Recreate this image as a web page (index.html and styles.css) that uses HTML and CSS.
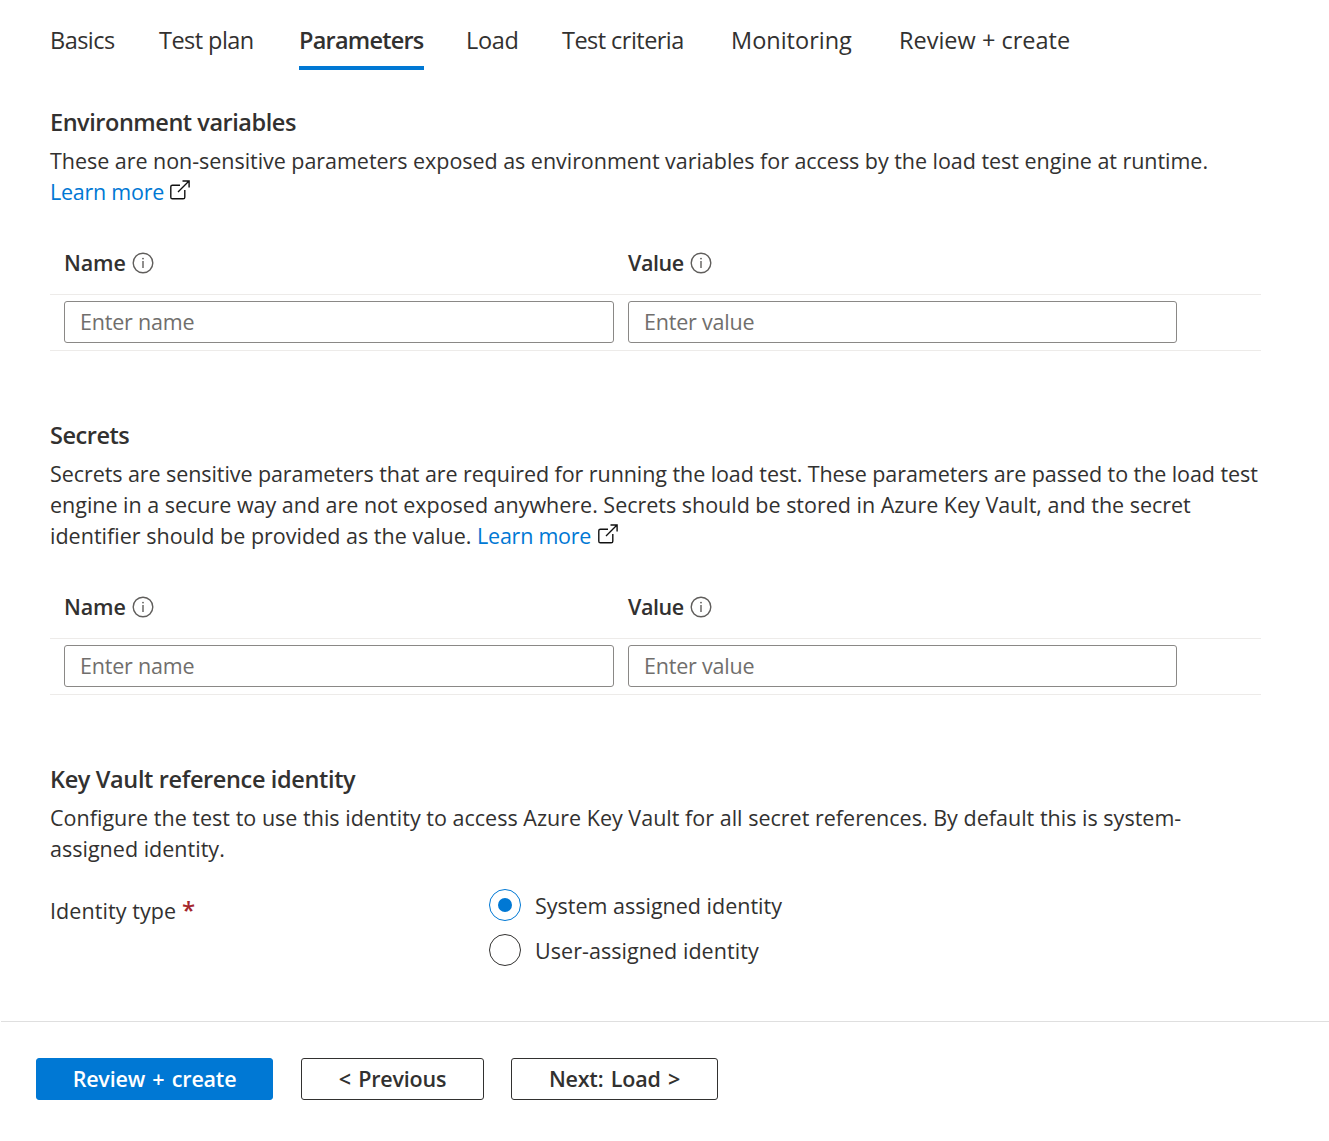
FILE: index.html
```html
<!DOCTYPE html>
<html lang="en">
<head>
<meta charset="utf-8">
<title>Create test - Parameters</title>
<link rel="stylesheet" href="styles.css">
</head>
<body>
<svg class="sprite" aria-hidden="true">
  <symbol id="info" viewBox="0 0 22 22">
    <circle cx="11" cy="11" r="9.8" fill="none" stroke="currentColor" stroke-width="1.4"/>
    <path d="M11 9v7" stroke="currentColor" stroke-width="1.4"/>
    <circle cx="11" cy="6.6" r="0.9" fill="currentColor"/>
  </symbol>
  <symbol id="external" viewBox="0 0 20 20">
    <path d="M10 5.2H2.4A1.6 1.6 0 0 0 .8 6.8v10.4a1.6 1.6 0 0 0 1.6 1.6h10.8a1.6 1.6 0 0 0 1.6-1.6V10M8 12L19 1M12.5 1h6.6v6.5" fill="none" stroke="currentColor" stroke-width="1.4"/>
  </symbol>
</svg>
<main class="content">
  <nav class="tabs">
    <a class="tab tight">Basics</a>
    <a class="tab tight">Test plan</a>
    <a class="tab active">Parameters</a>
    <a class="tab snug">Load</a>
    <a class="tab tight">Test criteria</a>
    <a class="tab">Monitoring</a>
    <a class="tab">Review + create</a>
  </nav>

  <section class="section first">
    <h2 class="title">Environment variables</h2>
    <p class="desc">These are non-sensitive parameters exposed as environment variables for access by the load test engine at runtime.<br><a class="link">Learn more</a> <svg class="external"><use href="#external"/></svg></p>
    <div class="table">
      <div class="row head">
        <div class="th">Name <svg class="info"><use href="#info"/></svg></div>
        <div class="th value">Value <svg class="info"><use href="#info"/></svg></div>
      </div>
      <div class="row">
        <input class="field" placeholder="Enter name">
        <input class="field" placeholder="Enter value">
      </div>
    </div>
  </section>

  <section class="section">
    <h2 class="title">Secrets</h2>
    <p class="desc"><span class="condensed">Secrets are sensitive parameters that are required for running the load test. These parameters are passed to the load test</span><br><span class="even">engine in a secure way and are not exposed anywhere. Secrets should be stored in Azure Key Vault, and the secret</span><br><span class="loose">identifier should be provided as the value.</span> <a class="link">Learn more</a> <svg class="external"><use href="#external"/></svg></p>
    <div class="table">
      <div class="row head">
        <div class="th">Name <svg class="info"><use href="#info"/></svg></div>
        <div class="th value">Value <svg class="info"><use href="#info"/></svg></div>
      </div>
      <div class="row">
        <input class="field" placeholder="Enter name">
        <input class="field" placeholder="Enter value">
      </div>
    </div>
  </section>

  <section class="section">
    <h2 class="title wide">Key Vault reference identity</h2>
    <p class="desc"><span class="loose">Configure the test to use this identity to access Azure Key Vault for all secret references. By default this is system-<br>assigned identity.</span></p>
    <div class="identity">
      <div class="label">Identity type <span class="required">*</span></div>
      <div class="options">
        <label class="option"><span class="radio checked"></span>System assigned identity</label>
        <label class="option user"><span class="radio"></span>User-assigned identity</label>
      </div>
    </div>
  </section>
</main>
<footer class="footer">
  <button class="button primary">Review + create</button>
  <button class="button previous">&lt; Previous</button>
  <button class="button next">Next: Load &gt;</button>
</footer>
</body>
</html>
```
FILE: styles.css
```css
* { box-sizing: border-box; }
body {
  margin: 0;
  height: 1141px;
  overflow: hidden;
  display: flex;
  flex-direction: column;
  background: #fff;
  color: #323130;
  font: 21.5px/31px "Segoe UI", "Open Sans", "Noto Sans", sans-serif;
}
.sprite { display: none; }
.content { height: 1021px; padding: 0 50px; }

.tabs {
  display: grid;
  grid-template-columns: 109px 140px 167px 96px 169px 168px auto;
  justify-items: start;
  height: 70px;
}
.tab {
  height: 70px;
  padding-top: 23px;
  border-bottom: 4px solid transparent;
  font-size: 23.5px;
  line-height: 34px;
  white-space: nowrap;
}
.tab.tight { letter-spacing: -0.54px; }
.tab.snug { letter-spacing: -0.3px; }
.tab.active { width: 125px; border-color: #0078d4; font-weight: 600; letter-spacing: -0.78px; }

.section { margin-top: 67px; }
.section.first { margin-top: 35px; }
.title { margin: 0 0 6px; font-size: 23.5px; line-height: 34px; font-weight: 600; letter-spacing: -0.46px; }
.title.wide { letter-spacing: -0.36px; }
.desc { margin: 0; white-space: nowrap; letter-spacing: -0.04px; }
.condensed { letter-spacing: -0.075px; }
.even { letter-spacing: -0.015px; }
.loose { letter-spacing: 0.015px; }
.link { color: #0078d4; letter-spacing: -0.24px; }
.external { width: 20px; height: 20px; margin-left: 0.8px; color: #111; vertical-align: 0; }

.table { width: 1211px; margin-top: 25px; }
.row {
  display: grid;
  grid-template-columns: 550px 549px;
  column-gap: 14px;
  height: 56px;
  padding: 6px 14px 7px;
  border-bottom: 1px solid #edebe9;
}
.row.head { height: 63px; padding: 0 14px 2px; align-items: center; }
.th { display: flex; align-items: center; gap: 6.5px; font-weight: 600; letter-spacing: -0.1px; }
.th.value { letter-spacing: -0.45px; }
.info { width: 22px; height: 22px; margin-top: 2px; color: #605e5c; }
.field {
  height: 42px;
  padding: 0 15px 2px;
  border: 1px solid #8a8886;
  border-radius: 3px;
  background: #fff;
  font: inherit;
  letter-spacing: -0.2px;
}
.field::placeholder { color: #706e6c; opacity: 1; }

.identity { display: grid; grid-template-columns: 439px auto; margin-top: 25px; }
.label { padding-top: 6px; letter-spacing: 0.08px; }
.required { color: #a4262c; font-size: 24px; font-weight: 600; line-height: 1; }
.options { display: flex; flex-direction: column; gap: 13px; }
.option { display: flex; align-items: center; gap: 14px; height: 32px; }
.option.user { letter-spacing: 0.05px; }
.radio {
  display: grid;
  place-items: center;
  width: 32px;
  height: 32px;
  border: 1px solid #323130;
  border-radius: 50%;
}
.radio.checked { border-color: #0078d4; }
.radio.checked::before { content: ""; width: 14px; height: 14px; border-radius: 50%; background: #0078d4; }

.footer { display: flex; align-items: flex-start; height: 120px; margin-left: 1px; padding: 36px 35px; border-top: 1px solid #dfdfdf; }
.button {
  height: 42px;
  padding: 0 0 2px;
  border: 1px solid #323130;
  border-radius: 3px;
  background: #fff;
  color: #323130;
  font: inherit;
  font-weight: 600;
  letter-spacing: -0.2px;
  word-spacing: 2px;
}
.primary { width: 237px; margin-right: 28px; border-color: #0078d4; background: #0078d4; color: #fff; }
.previous { width: 183px; margin-right: 27px; }
.next { width: 207px; }
```
